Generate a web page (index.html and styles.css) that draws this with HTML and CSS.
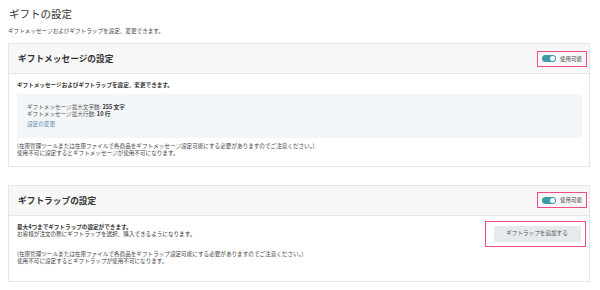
FILE: index.html
```html
<!DOCTYPE html>
<html lang="ja">
<head>
<meta charset="utf-8">
<link rel="stylesheet" href="styles.css">
</head>
<body>
<div class="page">
  <h1 class="title">ギフトの設定</h1>
  <p class="subtitle">ギフトメッセージおよびギフトラップを設定、変更できます。</p>

  <section class="card card-msg">
    <div class="card-head">
      <h2 class="card-title">ギフトメッセージの設定</h2>
      <div class="mark toggle-mark">
        <span class="toggle"><span class="knob"></span></span>
        <span class="toggle-label">使用可能</span>
      </div>
    </div>
    <div class="card-body">
      <p class="strong">ギフトメッセージおよびギフトラップを設定、変更できます。</p>
      <div class="info-box">
        <p>ギフトメッセージ最大文字数: <b>255 文字</b></p>
        <p>ギフトメッセージ最大行数: <b>10 行</b></p>
        <p class="link">設定の変更</p>
      </div>
      <div class="notes">
        <p>(在庫管理ツールまたは在庫ファイルで各商品をギフトメッセージ設定可能にする必要がありますのでご注意ください。)</p>
        <p>使用不可に設定するとギフトメッセージが使用不可になります。</p>
      </div>
    </div>
  </section>

  <section class="card card-wrap">
    <div class="card-head">
      <h2 class="card-title">ギフトラップの設定</h2>
      <div class="mark toggle-mark">
        <span class="toggle"><span class="knob"></span></span>
        <span class="toggle-label">使用可能</span>
      </div>
    </div>
    <div class="card-body">
      <div class="wrap-row">
        <div class="wrap-text">
          <p class="strong">最大4つまでギフトラップの設定ができます。</p>
          <p>お客様が注文の際にギフトラップを選択、購入できるようになります。</p>
        </div>
        <div class="mark button-mark">
          <span class="btn">ギフトラップを追加する</span>
        </div>
      </div>
      <div class="notes notes-wrap">
        <p>(在庫管理ツールまたは在庫ファイルで各商品をギフトラップ設定可能にする必要がありますのでご注意ください。)</p>
        <p>使用不可に設定するとギフトラップが使用不可になります。</p>
      </div>
    </div>
  </section>
</div>
</body>
</html>
```

FILE: styles.css
```css
* { box-sizing: border-box; }
html, body { margin: 0; padding: 0; background: #fff; }
body {
  font-family: "Noto Sans CJK JP", "Noto Sans", sans-serif;
  color: #333;
  -webkit-font-smoothing: antialiased;
}
p, h1, h2 { margin: 0; }
.page {
  width: 600px;
  padding: 6px 10px 0 8px;
}
.title {
  font-size: 10.5px;
  line-height: 16px;
  font-weight: 400;
  color: #333;
  padding-left: 1px;
}
.subtitle {
  font-size: 5.6px;
  line-height: 7px;
  margin-top: 5.5px;
  color: #444;
}
.card {
  border: 1px solid #e6e6e6;
  background: #fff;
}
.card-msg { margin-top: 8.5px; }
.card-wrap { margin-top: 17.5px; }
.card-head {
  height: 30px;
  background: #f7f7f7;
  border-bottom: 1px solid #e6e6e6;
  display: flex;
  align-items: center;
  justify-content: space-between;
  padding: 0 2px 0 9px;
}
.card-title {
  font-size: 8.7px;
  font-weight: 700;
  color: #333;
}
.mark {
  border: 1.5px solid #f04a88;
}
.toggle-mark {
  display: flex;
  align-items: center;
  gap: 4px;
  height: 16px;
  width: 50px;
  padding-left: 4px;
}
.toggle {
  width: 14px;
  height: 7px;
  border-radius: 4px;
  background: #3a9aa6;
  display: flex;
  align-items: center;
  justify-content: flex-end;
  padding-right: 1px;
}
.knob {
  width: 5px;
  height: 5px;
  border-radius: 50%;
  background: #fff;
}
.toggle-label {
  font-size: 5.5px;
  color: #444;
}
.card-body {
  padding: 7.5px 7px 9.5px 8px;
  font-size: 5.6px;
  line-height: 7px;
}
.strong { font-weight: 700; }
.info-box {
  margin-top: 5.5px;
  background: #f3f6f8;
  height: 44px;
  padding: 10px 10px 0;
  color: #555;
}
.info-box b { font-weight: 700; color: #333; }
.info-box .link {
  color: #5b8aa8;
  margin-top: 2.5px;
}
.notes {
  margin-top: 4.5px;
  color: #444;
}
.card-wrap .card-body { padding: 5px 3px 15.5px 8px; }
.wrap-row {
  display: flex;
  justify-content: space-between;
  align-items: flex-start;
}
.wrap-text { padding-top: 3px; }
.button-mark {
  width: 101px;
  height: 26px;
  display: flex;
  align-items: center;
  justify-content: center;
  padding-left: 3px;
}
.btn {
  width: 87px;
  height: 16px;
  background: #e5eaec;
  color: #555;
  font-size: 5.6px;
  display: flex;
  align-items: center;
  justify-content: center;
}
.notes-wrap { margin-top: 4.5px; }
```
